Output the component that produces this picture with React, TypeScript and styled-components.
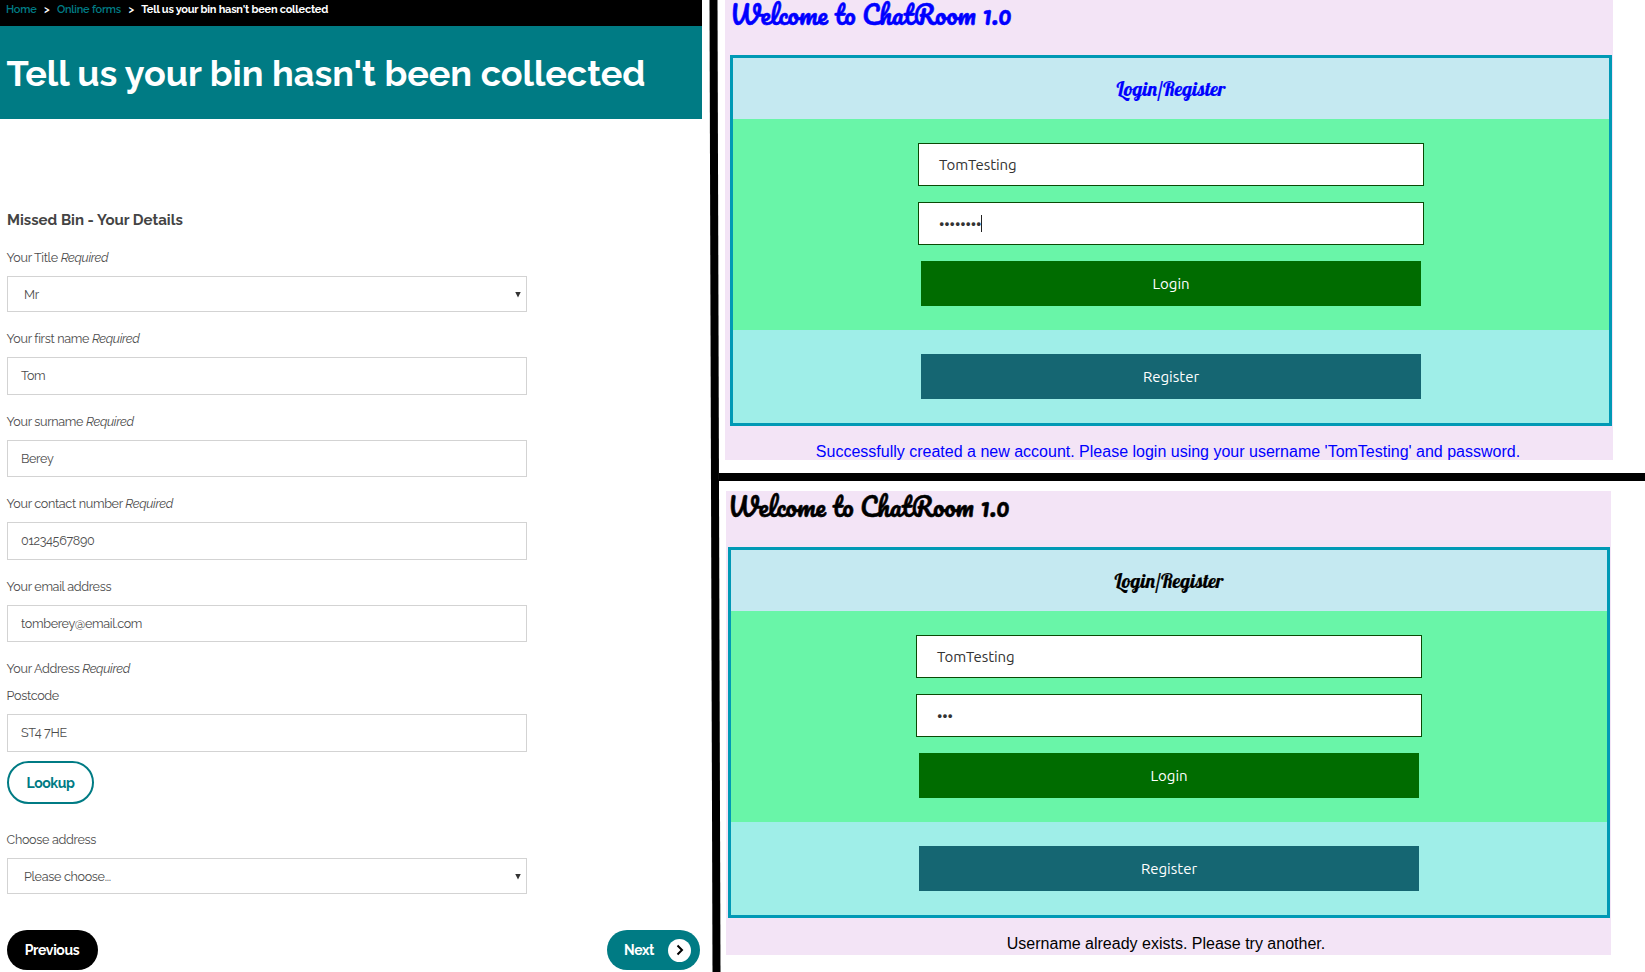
import React from 'react';
import styled, { createGlobalStyle } from 'styled-components';

const raleway = "Raleway, Lato, sans-serif";
const ubuntu = "Ubuntu, 'Noto Sans', sans-serif";

const GlobalStyle = createGlobalStyle`
  * { box-sizing: border-box; }
  body { margin: 0; background: #fff; overflow: hidden; }
`;

const Page = styled.div`
  display: flex;
  width: 1645px;
  height: 972px;
  overflow: hidden;
  background: #fff;
`;

/* ---------- council form ---------- */

const FormPage = styled.section`
  width: 702px;
  flex: none;
  font-family: ${raleway};
  font-size: 12.6px;
  line-height: 20px;
  letter-spacing: -0.33px;
  color: #4c4c4c;
`;

const Breadcrumbs = styled.nav`
  display: flex;
  gap: 7.5px;
  height: 26px;
  padding: 2px 0 0 6px;
  background: #000;
  color: #fff;
  font-size: 11px;
  font-weight: 600;
  line-height: 15px;
  letter-spacing: -0.23px;
  white-space: nowrap;
`;

const Crumb = styled.span`
  color: #007b84;
`;

const CurrentCrumb = styled.span`
  font-weight: 700;
`;

const Banner = styled.header`
  display: flex;
  align-items: center;
  height: 93px;
  padding: 1px 0 0 6.5px;
  background: #007b84;
`;

const BannerTitle = styled.h1`
  margin: 0;
  color: #fff;
  font-size: 36px;
  font-weight: 700;
  line-height: 42px;
  letter-spacing: -0.02px;
  white-space: nowrap;
`;

const FormBody = styled.form`
  display: flex;
  flex-direction: column;
  align-items: flex-start;
  padding: 91px 2px 0 7px;
`;

const FormHeading = styled.h2`
  margin: 0 0 18px;
  color: #444;
  font-size: 15px;
  font-weight: 700;
  line-height: 20px;
  letter-spacing: 0;
`;

const Field = styled.div<{ $gap?: number }>`
  display: flex;
  flex-direction: column;
  width: 520px;
  margin-bottom: ${(p) => p.$gap ?? 17}px;
`;

const Label = styled.label<{ $gap?: number }>`
  margin: 0 0 ${(p) => p.$gap ?? 8}px -0.4px;
  height: 20px;
`;

const TextBox = styled.div<{ $height: number }>`
  display: flex;
  align-items: center;
  height: ${(p) => p.$height}px;
  padding-left: 13px;
  border: 1px solid #d3d3d3;
`;

const SelectBox = styled.div`
  display: flex;
  align-items: center;
  justify-content: space-between;
  height: 36px;
  padding: 1px 5px 0 16px;
  border: 1px solid #d3d3d3;
`;

const Arrow = styled.span`
  width: 6px;
  height: 6px;
  background: #333;
  clip-path: polygon(0 0, 100% 0, 50% 100%);
`;

const LookupButton = styled.button`
  width: 87px;
  height: 43px;
  margin: 0 0 26px;
  padding: 0;
  border: 2px solid #007b84;
  border-radius: 22px;
  background: #fff;
  color: #007b84;
  font: 700 14px ${raleway};
  letter-spacing: -0.4px;
`;

const FormActions = styled.div`
  display: flex;
  justify-content: space-between;
  width: 693px;
`;

const PillButton = styled.button<{ $tone: string; $width: number; $align?: string }>`
  display: flex;
  align-items: center;
  justify-content: ${(p) => p.$align ?? 'center'};
  width: ${(p) => p.$width}px;
  height: 40px;
  padding: 0 9px 0 ${(p) => (p.$align ? 17 : 8)}px;
  border: 0;
  border-radius: 20px;
  background: ${(p) => p.$tone};
  color: #fff;
  font: 700 14px ${raleway};
  letter-spacing: -0.35px;
`;

const ArrowDisc = styled.span`
  display: flex;
  align-items: center;
  justify-content: center;
  width: 23px;
  height: 23px;
  border-radius: 50%;
  background: #fff;
`;

/* ---------- dividers ---------- */

const VerticalRule = styled.div`
  flex: none;
  width: 12px;
  height: 972px;
  margin: 0 -2px 0 7px;
  background: #000;
  clip-path: polygon(0.5px 0, 8.5px 0, 11.5px 100%, 3.5px 100%);
`;

const HorizontalRule = styled.div`
  height: 8px;
  margin: 13px 0 10px;
  background: #000;
`;

/* ---------- chat room ---------- */

const ChatColumn = styled.div`
  flex: 1;
  display: flex;
  flex-direction: column;
`;

type Variant = 'success' | 'error';

const ChatPage = styled.section<{ $variant: Variant }>`
  width: ${(p) => (p.$variant === 'success' ? 888 : 885)}px;
  height: ${(p) => (p.$variant === 'success' ? 460 : 464)}px;
  margin-left: ${(p) => (p.$variant === 'success' ? 6 : 7)}px;
  padding: ${(p) => (p.$variant === 'success' ? '0 1px 0 5px' : '1px 1px 0 2px')};
  background: #f3e4f6;
  color: ${(p) => (p.$variant === 'success' ? '#0000ff' : '#000')};
`;

const ChatTitle = styled.h1`
  margin: 0 0 27px;
  font: normal 25px Pacifico, 'Liberation Serif', cursive;
  line-height: 28px;
  -webkit-text-stroke: 0.5px currentColor;
  white-space: nowrap;
`;

const LoginCard = styled.div`
  border: 3px solid #0099b5;
`;

const CardHeader = styled.h2`
  display: flex;
  align-items: center;
  justify-content: center;
  height: 61px;
  margin: 0;
  background: #c5e9f1;
  font: normal 19.7px Lobster, 'Liberation Serif', cursive;
  -webkit-text-stroke: 0.2px currentColor;
`;

const CardSection = styled.div<{ $tone: string }>`
  display: flex;
  flex-direction: column;
  align-items: center;
  gap: 16px;
  padding: 24px 0;
  background: ${(p) => p.$tone};
`;

const ChatInput = styled.div`
  display: flex;
  align-items: center;
  width: 506px;
  height: 43px;
  padding-left: 20px;
  border: 1px solid #0a4a05;
  background: #fff;
  color: #333;
  font: 15px ${ubuntu};
  letter-spacing: -0.1px;
`;

const Caret = styled.span`
  width: 1px;
  height: 17px;
  background: #222;
`;

const ChatButton = styled.button<{ $tone: string }>`
  width: 500px;
  height: 45px;
  padding: 0;
  border: 0;
  background: ${(p) => p.$tone};
  color: #fff;
  font: 15px ${ubuntu};
`;

const Message = styled.p`
  margin: 16px 6px 0 0;
  font: 16px 'Liberation Sans', Arial, sans-serif;
  line-height: 19px;
  text-align: center;
  white-space: nowrap;
`;

const RequiredLabel = ({ text, gap }: { text: string; gap?: number }) => (
  <Label $gap={gap}>
    {text} <em>Required</em>
  </Label>
);

function ChatRoom(props: { variant: Variant; dots: number; focused?: boolean; message: string }) {
  return (
    <ChatPage $variant={props.variant}>
      <ChatTitle>Welcome to ChatRoom 1.0</ChatTitle>
      <LoginCard>
        <CardHeader>Login/Register</CardHeader>
        <CardSection $tone="#69f5a8">
          <ChatInput>TomTesting</ChatInput>
          <ChatInput>
            {'•'.repeat(props.dots)}
            {props.focused && <Caret />}
          </ChatInput>
          <ChatButton $tone="#006c00">Login</ChatButton>
        </CardSection>
        <CardSection $tone="#9feee8">
          <ChatButton $tone="#156672">Register</ChatButton>
        </CardSection>
      </LoginCard>
      <Message>{props.message}</Message>
    </ChatPage>
  );
}

export default function App() {
  return (
    <Page>
      <GlobalStyle />
      <FormPage>
        <Breadcrumbs>
          <Crumb>Home</Crumb>
          <span>&gt;</span>
          <Crumb>Online forms</Crumb>
          <span>&gt;</span>
          <CurrentCrumb>Tell us your bin hasn't been collected</CurrentCrumb>
        </Breadcrumbs>
        <Banner>
          <BannerTitle>Tell us your bin hasn't been collected</BannerTitle>
        </Banner>
        <FormBody>
          <FormHeading>Missed Bin - Your Details</FormHeading>
          <Field>
            <RequiredLabel text="Your Title" />
            <SelectBox>
              Mr <Arrow />
            </SelectBox>
          </Field>
          <Field>
            <RequiredLabel text="Your first name" />
            <TextBox $height={38}>Tom</TextBox>
          </Field>
          <Field>
            <RequiredLabel text="Your surname" />
            <TextBox $height={37}>Berey</TextBox>
          </Field>
          <Field>
            <RequiredLabel text="Your contact number" />
            <TextBox $height={38}>01234567890</TextBox>
          </Field>
          <Field>
            <Label>Your email address</Label>
            <TextBox $height={37}>tomberey@email.com</TextBox>
          </Field>
          <Field $gap={9}>
            <RequiredLabel text="Your Address" gap={7} />
            <Label>Postcode</Label>
            <TextBox $height={38}>ST4 7HE</TextBox>
          </Field>
          <LookupButton type="button">Lookup</LookupButton>
          <Field $gap={36}>
            <Label>Choose address</Label>
            <SelectBox>
              Please choose... <Arrow />
            </SelectBox>
          </Field>
          <FormActions>
            <PillButton type="button" $tone="#000" $width={91}>
              Previous
            </PillButton>
            <PillButton type="button" $tone="#007b84" $width={93} $align="space-between">
              Next
              <ArrowDisc>
                <svg width="8" height="12" viewBox="0 0 8 12" fill="none" stroke="#000" strokeWidth="2">
                  <path d="M1.5 1.5 6 6l-4.5 4.5" />
                </svg>
              </ArrowDisc>
            </PillButton>
          </FormActions>
        </FormBody>
      </FormPage>
      <VerticalRule />
      <ChatColumn>
        <ChatRoom
          variant="success"
          dots={8}
          focused
          message="Successfully created a new account. Please login using your username 'TomTesting' and password."
        />
        <HorizontalRule />
        <ChatRoom variant="error" dots={3} message="Username already exists. Please try another." />
      </ChatColumn>
    </Page>
  );
}
